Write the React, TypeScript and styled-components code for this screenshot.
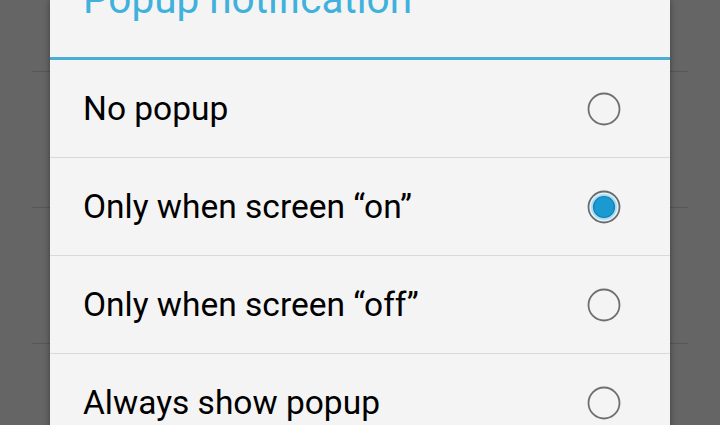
import styled, { createGlobalStyle } from "styled-components";

const GlobalStyle = createGlobalStyle`
  html, body {
    margin: 0;
    padding: 0;
    background: #656565;
    overflow: hidden;
  }
  body {
    font-family: Roboto, "Liberation Sans", sans-serif;
  }
`;

const Screen = styled.div`
  display: grid;
  grid-template-columns: 50px 620px 50px;
  width: 720px;
  height: 425px;
  overflow: hidden;
  background: #656565;
`;

const Gutter = styled.div<{ $side: "left" | "right" }>`
  display: flex;
  flex-direction: column;
  align-items: ${({ $side }) => ($side === "left" ? "flex-end" : "flex-start")};
  gap: 135px;
  padding-top: 71px;
`;

const GhostLine = styled.div`
  width: 18px;
  height: 1px;
  background: #575757;
`;

const Dialog = styled.div`
  display: flex;
  flex-direction: column;
  background: #f4f4f4;
  box-shadow: 0 0 6px rgba(0, 0, 0, 0.4);
  position: relative;
  z-index: 1;
`;

const TitleBar = styled.div`
  height: 57px;
  overflow: hidden;
  padding-left: 33px;
`;

const Title = styled.h2`
  margin: -23px 0 0;
  font-size: 40.5px;
  line-height: 44px;
  font-weight: 400;
  color: #3fb1dc;
  white-space: nowrap;
`;

const TitleRule = styled.div`
  height: 3px;
  background: #48afd6;
`;

const OptionList = styled.div`
  display: flex;
  flex-direction: column;
`;

const Option = styled.div`
  display: flex;
  align-items: center;
  justify-content: space-between;
  height: 97px;
  padding: 0 49px 0 33px;
  & + & {
    border-top: 1px solid #d9d9d9;
  }
`;

const Label = styled.span`
  font-size: 33.5px;
  color: #000;
`;

const RadioIcon = ({ checked }: { checked: boolean }) => (
  <svg width="34" height="34" viewBox="0 0 34 34">
    {checked ? (
      <>
        <circle cx="17" cy="17" r="15.5" fill="#e3f4fb" stroke="#6c6c6c" strokeWidth="1.8" />
        <circle cx="17" cy="17" r="13" fill="#aadcf2" />
        <circle cx="17" cy="17" r="10.5" fill="#1a9ad0" stroke="#1582b3" strokeWidth="1.2" />
      </>
    ) : (
      <circle cx="17" cy="17" r="15.5" fill="none" stroke="#6f6f6f" strokeWidth="1.8" />
    )}
  </svg>
);

const options = [
  { label: "No popup", checked: false },
  { label: "Only when screen \u201con\u201d", checked: true },
  { label: "Only when screen \u201coff\u201d", checked: false },
  { label: "Always show popup", checked: false },
];

const App = () => {
  return (
    <>
      <GlobalStyle />
      <Screen>
        <Gutter $side="left">
          <GhostLine />
          <GhostLine />
          <GhostLine />
        </Gutter>
        <Dialog>
          <TitleBar>
            <Title>Popup notification</Title>
          </TitleBar>
          <TitleRule />
          <OptionList>
            {options.map((o) => (
              <Option key={o.label}>
                <Label>{o.label}</Label>
                <RadioIcon checked={o.checked} />
              </Option>
            ))}
          </OptionList>
        </Dialog>
        <Gutter $side="right">
          <GhostLine />
          <GhostLine />
          <GhostLine />
        </Gutter>
      </Screen>
    </>
  );
};

export default App;
